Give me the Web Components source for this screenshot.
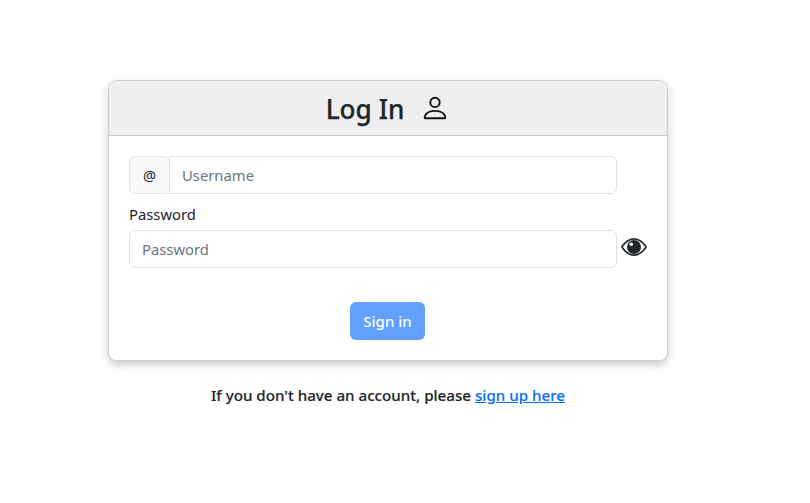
<!DOCTYPE html>
<html lang="en"><head><meta charset="utf-8">
<style>
html,body{margin:0;padding:0;background:#fff}
body{font-family:"Noto Sans","Open Sans","Liberation Sans",sans-serif;color:#212529;font-size:15px;line-height:24px;height:503px;overflow:hidden}
</style></head><body>
<login-page></login-page>
<template id="t-page"><style>
:host{display:flex;flex-direction:column;align-items:flex-start;padding:80px 0 0 108px}
.foot{width:560px;margin-top:22px;text-align:center;font-weight:500;font-size:15.15px;line-height:24px;display:block;-webkit-text-stroke:.15px currentColor}
a{color:#0d6efd;text-decoration:underline}
</style>
<login-card></login-card>
<div class="foot">If you don't have an account, please <a href="#">sign up here</a></div>
</template>
<template id="t-card"><style>
:host{display:block;width:560px;box-sizing:border-box;border:1px solid #cfcfcf;border-radius:8px;background:#fff;box-shadow:0 4px 9px rgba(0,0,0,.2);overflow:hidden}
.head{height:54px;background:#efefef;border-bottom:1px solid #c9c9c9;display:flex;align-items:center;justify-content:center;gap:16px}
h1{margin:2px 0 0;font-size:26.2px;font-weight:500;line-height:32px;color:#212529;-webkit-text-stroke:.25px currentColor}
svg.u{width:30px;height:30px;display:block;margin-top:-1px}
.body{padding:20px 20px 20px;display:flex;flex-direction:column}
.row{display:flex;align-items:center}
.group{display:flex;width:488px}
.add{width:41px;margin-right:-1px;flex:none;box-sizing:border-box;height:38px;border:1px solid #e2e6e9;border-radius:6px;background:#f8f9fa;display:flex;align-items:center;justify-content:center;font-size:14.6px;font-weight:400}
.group login-input{flex:1}
label{display:block;margin-top:8px;height:28px;line-height:24px;font-size:14.8px;color:#212529}
svg.e{width:26px;height:26px;margin-left:4px;margin-top:-4px;display:block}
.act{display:flex;justify-content:center;margin-top:34px}
.btn{width:75px;height:38px;box-sizing:border-box;border:0;border-radius:6px;background:#62a1ff;color:#fff;font:500 15px/24px "Noto Sans","Open Sans",sans-serif;padding:0;margin-right:1px}
</style>
<div class="head"><h1>Log In</h1>
<svg class="u" viewBox="0 0 16 16" fill="#111"><path d="M8 8a3 3 0 1 0 0-6 3 3 0 0 0 0 6Zm2-3a2 2 0 1 1-4 0 2 2 0 0 1 4 0Zm4 8c0 1-1 1-1 1H3s-1 0-1-1 1-4 6-4 6 3 6 4Zm-1-.004c-.001-.246-.154-.986-.832-1.664C11.516 10.68 10.289 10 8 10c-2.29 0-3.516.68-4.168 1.332-.678.678-.83 1.418-.832 1.664h10Z"/></svg></div>
<div class="body">
<div class="group"><div class="add">@</div><login-input joined placeholder="Username"></login-input></div>
<label>Password</label>
<div class="row"><login-input style="width:488px" placeholder="Password" type="password"></login-input>
<svg class="e" viewBox="0 0 16 16" fill="#212529"><path d="M16 8s-3-5.5-8-5.5S0 8 0 8s3 5.5 8 5.5S16 8 16 8ZM1.173 8a13.133 13.133 0 0 1 1.66-2.043C4.12 4.668 5.88 3.5 8 3.5c2.12 0 3.879 1.168 5.168 2.457A13.133 13.133 0 0 1 14.828 8c-.058.087-.122.183-.195.288-.335.48-.83 1.12-1.465 1.755C11.879 11.332 10.119 12.5 8 12.5c-2.12 0-3.879-1.168-5.168-2.457A13.134 13.134 0 0 1 1.172 8Z"/><circle cx="8" cy="8" r="4.3"/><circle cx="6.3" cy="6.3" r="1.1" fill="#fff"/></svg></div>
<div class="act"><button class="btn">Sign in</button></div>
</div></template>
<template id="t-input"><style>
:host{display:block}
input{display:block;width:100%;height:38px;box-sizing:border-box;border:1px solid #dee2e6;border-radius:6px;padding:0 12px;font:14.8px/24px "Noto Sans","Open Sans",sans-serif;color:#212529;background:#fff;outline:0}
:host([joined]) input{border-radius:0 6px 6px 0}
input::placeholder{color:#6c757d;opacity:1}
</style><input></template>
<script>
function def(n,t,f){customElements.define(n,class extends HTMLElement{constructor(){super();this.attachShadow({mode:"open"}).appendChild(document.getElementById(t).content.cloneNode(true));}connectedCallback(){f&&f(this)}})}
def("login-input","t-input",h=>{const i=h.shadowRoot.querySelector("input");i.placeholder=h.getAttribute("placeholder")||"";i.type=h.getAttribute("type")||"text"});
def("login-card","t-card");
def("login-page","t-page");
</script>
</body></html>
